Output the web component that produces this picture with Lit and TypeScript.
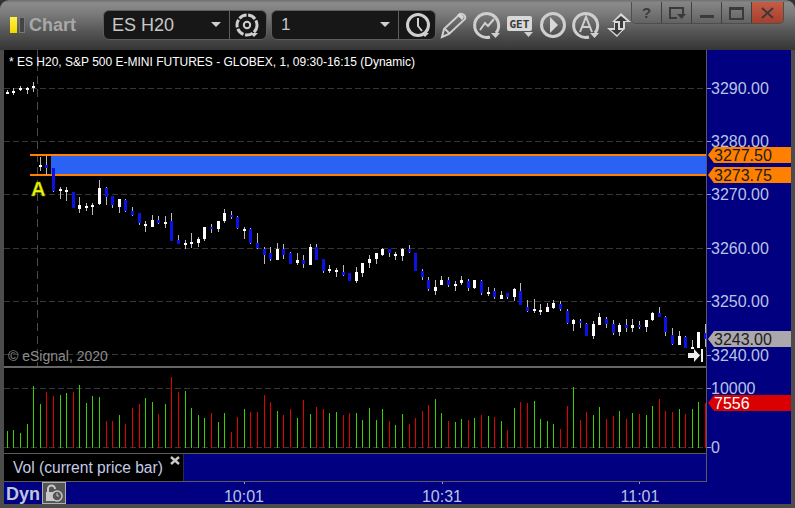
import { LitElement, html, css, svg } from "lit";
import { customElement } from "lit/decorators.js";

// [wickTop, wickBottom, bodyTop, bodyBottom, colour]
const W = 1, B = 0;
const CANDLES: number[][] = [
  [90,94,92,94,W],[88,95,91,93,W],[86,91,88,90,W],[87,94,88,90,W],[82,92,86,88,W],
  [157,171,165,167,W],[156,175,165,168,B],[168,192,168,191,B],[187,199,189,191,W],[187,201,190,192,W],
  [192,208,192,208,B],[197,213,205,209,W],[203,211,206,208,W],[203,215,205,207,W],[180,205,188,204,W],
  [187,205,188,197,B],[196,208,196,205,B],[199,213,199,207,W],[199,212,200,211,B],[207,216,211,215,B],
  [213,225,213,223,B],[221,232,224,226,W],[215,227,220,227,W],[216,224,220,223,B],[216,228,222,224,W],
  [213,241,221,241,B],[235,244,240,244,B],[240,249,243,245,W],[233,248,242,244,W],[237,247,239,243,W],
  [227,241,227,239,W],[224,233,227,229,B],[221,232,221,229,W],[209,223,213,221,W],[211,219,215,217,B],
  [216,229,217,228,B],[227,239,229,231,W],[228,244,229,243,B],[233,249,243,248,B],[247,264,249,255,B],
  [247,261,253,259,B],[243,260,249,260,W],[244,259,249,255,B],[252,264,253,264,B],[253,265,260,263,W],
  [255,268,260,264,B],[244,265,247,265,W],[244,260,247,260,B],[259,273,259,271,B],[265,273,269,271,W],
  [268,277,270,272,W],[265,276,272,275,B],[273,281,273,281,B],[267,283,272,281,W],[263,277,263,273,W],
  [255,268,259,263,W],[253,264,253,259,W],[248,256,249,255,W],[249,257,249,253,B],[252,260,254,256,W],
  [248,261,249,256,W],[245,253,249,252,B],[253,271,253,271,B],[269,280,271,277,B],[277,291,280,289,B],
  [280,295,287,291,W],[276,285,280,285,W],[277,287,280,285,B],[281,291,284,286,W],[276,285,280,283,W],
  [279,291,281,288,B],[280,289,280,288,W],[280,295,281,293,B],[287,296,292,294,W],[288,299,291,297,B],
  [291,299,295,299,W],[293,299,293,297,B],[288,301,289,297,W],[283,305,291,305,B],[300,312,307,311,B],
  [299,313,309,311,W],[304,315,310,312,W],[303,312,307,312,W],[300,309,303,308,W],[301,311,304,309,B],
  [309,324,311,323,B],[319,331,320,324,W],[319,328,321,323,B],[323,336,324,336,B],[321,339,324,336,W],
  [313,325,317,325,W],[317,328,319,324,B],[320,335,324,333,B],[323,336,325,332,W],[319,332,325,328,B],
  [319,332,325,328,W],[321,329,325,327,B],[320,332,320,327,W],[312,321,313,320,W],[307,317,313,317,B],
  [316,336,317,332,B],[328,345,335,344,B],[331,345,336,345,W],[336,348,337,348,B],[340,349,347,349,W],
  [332,348,332,348,W],[324,347,333,339,B],
];
// absolute top of each volume bar; positive green, negative red
const VOL: number[] = [
  431,430,433,424,386,404,-392,-396,395,393,-392,385,403,396,397,-421,-421,415,-424,-408,
  -404,398,402,-414,404,-377,-392,391,408,415,418,-413,422,413,-432,-417,409,-412,-412,-395,
  -402,411,-415,-409,418,-400,414,-407,-409,413,412,-415,-413,413,420,408,420,409,-421,425,
  414,-424,-418,-411,-405,399,413,-421,422,419,-420,418,-415,416,-417,421,-430,408,-402,-403,
  401,419,421,424,-429,-406,387,-420,-412,415,407,-419,-416,411,-419,413,-414,415,406,-399,
  -411,-412,409,-414,409,402,-403,
];
const barX = (i: number) => Math.floor(7.33 + 6.585 * i);

const GRID = [88, 141, 194, 248, 301, 354];
const PRICES: [number, string][] = [[88, "3290.00"], [141, "3280.00"], [194, "3270.00"], [248, "3260.00"], [301, "3250.00"], [355, "3240.00"]];

const caret = (x: number, y: number, w = 10, h = 5) =>
  svg`<path class="caret" d="M${x} ${y}h${w}l-${w / 2} ${h}z"/>`;

@customElement("app-root")
export class AppRoot extends LitElement {
  static styles = css`
    :host { display: block; width: 795px; height: 508px; overflow: hidden; background: #333; font-family: "Liberation Sans", Arial, sans-serif; }
    .window { width: 795px; height: 508px; box-sizing: border-box; display: flex; flex-direction: column;
      background: linear-gradient(#6f6f6f 0, #8b8b8b 3px, #7a7a7a 14px, #555 32px, #353535 50px, #4c4c4c 50px);
      border-radius: 9px 9px 0 0; }
    .title { height: 50px; flex: none; display: flex; align-items: flex-start; position: relative; }
    .lights { display: flex; gap: 2px; margin: 17px 0 0 10px; }
    .light { width: 7px; height: 16px; box-sizing: border-box; }
    .light.on { background: linear-gradient(#fff24a, #f0d800); }
    .light.off { background: #444; border: 1px solid #777; width: 6px; }
    .name { font-size: 18px; font-weight: 700; color: #a8a8a8; margin: 15px 0 0 4px; line-height: 21px; width: 74px; }
    .combo { margin-top: 10px; height: 30px; box-sizing: border-box; background: #171717; border: 1px solid #5e5e5e; border-radius: 6px;
      display: flex; align-items: center; color: #c8c8c8; }
    .combo.a { width: 164px; }
    .combo.b { width: 165px; margin-left: 4px; }
    .combo .val { flex: 1; font-size: 18px; padding-left: 8px; line-height: 28px; }
    .combo.b .val { padding-left: 9px; font-size: 17px; }
    .combo .sep { width: 36px; height: 100%; border-left: 1px solid #5e5e5e; flex: none; }
    .combo .drop { flex: none; display: block; margin-right: 8px; }
    .combo svg { display: block; }
    .tools { display: flex; margin-top: 10px; }
    .tools svg { display: block; }
    .caps { display: flex; height: 21px; border: 1px solid #4e4e4e; border-top: 0; border-radius: 0 0 5px 5px; overflow: hidden; position: absolute; left: 631px; top: 2px; }
    .cap { width: 29px; height: 100%; border-right: 1px solid #3f3f3f; background: linear-gradient(#868686, #636363); display: flex; align-items: center; justify-content: center; }
    .cap:last-child { width: 31px; border-right: 0; background: linear-gradient(#c45c46, #a63f2b); }
    .cap svg { display: block; }
    .cap span { font-size: 15px; font-weight: 700; color: #3b3b3b; line-height: 1; }
    .body { margin: 0 4px 4px 4px; height: 454px; background: #000080; display: flex; flex-direction: column; }
    .top { display: flex; height: 432px; flex: none; }
    .plot { width: 702px; flex: none; display: flex; flex-direction: column; border-bottom: 1px solid #5a5a5a; height: 431px; }
    .plot svg, .axis svg, .times svg { display: block; }
    .pane-a { height: 316px; flex: none; }
    .pane-b { height: 85px; flex: none; border-top: 2px solid #666; }
    .legend { height: 27px; flex: none; display: flex; border-top: 1px solid #5a5a5a; }
    .legend-name { width: 180px; background: #000; border-right: 1px solid #2a2a4a; box-sizing: border-box; color: #c4cce6; font-size: 15.6px; line-height: 28px; padding-left: 9px; position: relative; }
    .close { position: absolute; right: 3px; top: 2px; display: block; }
    .axis { width: 85px; flex: none; border-left: 1px solid #5a5a5a; box-sizing: border-box; }
    .xaxis { flex: 1; display: flex; align-items: stretch; }
    .dyn { font-size: 18px; font-weight: 700; color: #c0c6dc; line-height: 24px; padding-left: 2px; width: 38px; flex: none; box-sizing: border-box; }
    .lock { width: 24px; height: 22px; box-sizing: border-box; border: 1px solid #b0b0b0; background: #555; flex: none; }
    .lock svg { display: block; }
    .times { flex: 1; }
    .candle-w { fill: #fff; }
    .candle-b { fill: #0a12e6; }
    .wick-w { fill: #bbb; }
    .wick-b { fill: #bbb; }
    .grid { stroke: #363636; stroke-width: 1; stroke-dasharray: 6 3; fill: none; }
    .vgrid { stroke: #4a4a4a; stroke-width: 1; stroke-dasharray: 8 5; fill: none; }
    .zone { fill: #2a62f4; }
    .level { fill: #ff8000; }
    .title-text { fill: #fff; font-size: 12px; }
    .copy { fill: #8c8c8c; font-size: 14px; }
    .mark { fill: #f4f400; stroke: #6f8f00; stroke-width: .4; font-size: 20px; font-weight: 700; }
    .gain { fill: #39d000; }
    .loss { fill: #e00000; }
    .tick { stroke: #8f9ac0; stroke-width: 1; }
    .label { fill: #b8c4e4; font-size: 16px; }
    .tag-text { fill: #1c1c1c; font-size: 16px; }
    .tag-vol { fill: #fff; font-size: 16px; }
    .orange { fill: #ff8000; }
    .grey { fill: #aaa8ac; }
    .red { fill: #d80000; }
    .ic { fill: none; stroke: #cfcfcf; stroke-width: 3; }
    .ic-thin { fill: none; stroke: #cfcfcf; stroke-width: 2; }
    .ic-fill { fill: #d8d8d8; }
    .caret { fill: #d0d0d0; }
    .dark { fill: #3a3a3a; }
    .cap-ic { fill: none; stroke: #3a3a3a; stroke-width: 2; }
    .cap-fill { fill: #3a3a3a; }
    .get-text { fill: #3a3a3a; font-size: 11px; font-weight: 700; font-family: "DejaVu Sans Mono", monospace; }
    .arrow { fill: #eee; }
    .lock-ic { fill: none; stroke: #c8c8c8; stroke-width: 2; }
    .lock-fill { fill: #c8c8c8; }
  `;

  private candles() {
    return CANDLES.map(([wt, wb, bt, bb, c], i) => {
      const x = barX(i);
      const k = c ? "w" : "b";
      return svg`<rect class="wick-${k}" x=${x} y=${wt} width="1" height=${wb - wt}/>
        <rect class="candle-${k}" x=${x - 1} y=${bt} width="3" height=${bb - bt}/>`;
    });
  }

  private volumes() {
    return VOL.map((v, i) =>
      svg`<rect class=${v > 0 ? "gain" : "loss"} x=${barX(i)} y=${Math.abs(v)} width="1" height=${448 - Math.abs(v)}/>`);
  }

  private tag(y: number, cls: string, txt: string, text: string) {
    return svg`<path class=${cls} d="M708 ${y}l6 -8h77v16h-77z"/>
      <text class=${txt} x="714" y=${y + 6}>${text}</text>`;
  }

  render() {
    return html`<div class="window">
      <div class="title">
        <div class="lights"><div class="light on"></div><div class="light off"></div></div>
        <div class="name">Chart</div>
        <div class="combo a">
          <span class="val">ES H20</span>
          <svg class="drop" width="10" height="6">${caret(0, 0)}</svg>
          <div class="sep">
            <svg width="36" height="28" viewBox="231 11 36 28">
              <circle class="ic" cx="248" cy="25" r="10" stroke-dasharray="8 1.6"/>
              <circle class="ic-thin" cx="248" cy="25" r="3.2"/>
              ${caret(251, 33, 8, 4)}
            </svg>
          </div>
        </div>
        <div class="combo b">
          <span class="val">1</span>
          <svg class="drop" width="10" height="6">${caret(0, 0)}</svg>
          <div class="sep">
            <svg width="36" height="28" viewBox="398 11 36 28">
              <circle class="ic" cx="417" cy="25" r="10.5"/>
              <path class="ic-thin" d="M417 18v8l4 5"/>
              ${caret(420, 33, 8, 4)}
            </svg>
          </div>
        </div>
        <div class="tools">
          <svg width="196" height="32" viewBox="436 10 196 32">
            <path class="ic-thin" d="M442 37l2-8 16-15q2-1 4 1t1 4l-16 15z"/>
            <path class="ic-thin" d="M445 29l5 5"/>
            <path class="ic-fill" d="M457 15l3-2 4 4-2 3z"/>
            <path class="ic" d="M496 33a12 12 0 1 0-6 4"/>
            <path class="ic-thin" d="M480 30l5-7 3 3 6-7"/>
            ${caret(491, 33, 9, 5)}
            <rect class="ic-fill" x="507" y="16" width="25" height="15" rx="2"/>
            <text class="get-text" x="509.500" y="28">GET</text>
            ${caret(524, 32, 9, 5)}
            <circle class="ic" cx="553" cy="25" r="11.500"/>
            <path class="ic-fill" d="M550 17l8 8-8 8z"/>
            <path class="ic" d="M595 33a12 12 0 1 0-6 4"/>
            <path class="ic-thin" d="M580 32l6-15 6 15M582 27h8"/>
            ${caret(590, 33, 9, 5)}
            <path class="ic-fill" d="M621 13l10 9h-6v7l-4 3-4-3v-7h-5z"/>
            <path class="dark" d="M621 16l6 5h-4v7h-4v-7h-4z"/>
            <path class="ic-fill" d="M614 21h6v7h5l-8 9-10-9h7z"/>
            <path class="dark" d="M615 23h3v7h4l-5 5-6-5h4z"/>
          </svg>
        </div>
        <div class="caps">
          <div class="cap"><span>?</span></div>
          <div class="cap"><svg width="18" height="14"><path class="cap-ic" d="M9 12H2V2h13v6"/><path class="cap-fill" d="M9 8h9l-4.500 5z"/></svg></div>
          <div class="cap"><svg width="18" height="14"><rect class="cap-fill" x="2" y="9" width="14" height="3"/></svg></div>
          <div class="cap"><svg width="18" height="14"><rect class="cap-ic" x="2" y="2" width="13" height="11"/><rect class="cap-fill" x="1" y="1" width="15" height="3"/></svg></div>
          <div class="cap"><svg width="18" height="14"><path class="cap-ic" d="M3 2l11 10M14 2L3 12"/></svg></div>
        </div>
      </div>
      <div class="body">
        <div class="top">
          <div class="plot">
            <div class="pane-a">
              <svg width="702" height="316" viewBox="4 50 702 316" shape-rendering="crispEdges">
                <rect x="4" y="50" width="702" height="316" fill="#000"/>
                ${GRID.map((y) => svg`<path class="grid" d="M4 ${y + 0.5}H706"/>`)}
                <path class="vgrid" d="M37.500 50V366"/>
                <rect class="zone" x="51" y="156" width="655" height="18"/>
                <rect class="level" x="30" y="154" width="676" height="2"/>
                <rect class="level" x="30" y="174" width="676" height="2"/>
                ${this.candles()}
                <g shape-rendering="auto">
                  <text class="title-text" x="9" y="66">* ES H20, S&amp;P 500 E-MINI FUTURES - GLOBEX, 1, 09:30-16:15 (Dynamic)</text>
                  <text class="copy" x="8" y="361">© eSignal, 2020</text>
                  <text class="mark" x="31" y="196">A</text>
                  <path class="arrow" d="M688 353h6v-4l6 6.500-6 6.500v-4h-6z"/>
                  <rect class="arrow" x="701" y="349" width="2" height="13"/>
                </g>
              </svg>
            </div>
            <div class="pane-b">
              <svg width="702" height="85" viewBox="4 368 702 85" shape-rendering="crispEdges">
                <rect x="4" y="368" width="702" height="85" fill="#000"/>
                <path class="grid" d="M4 388.500H706M4 447.500H706"/>
                ${this.volumes()}
              </svg>
            </div>
            <div class="legend">
              <div class="legend-name">Vol (current price bar)
                <svg class="close" width="10" height="9"><path d="M1 1l8 7M9 1L1 8" fill="none" stroke="#c8c8c8" stroke-width="2.400"/></svg>
              </div>
            </div>
          </div>
          <div class="axis">
            <svg width="84" height="431" viewBox="707 50 84 431">
              ${PRICES.map(([y, t]) => svg`<path class="tick" d="M707 ${y + 0.5}h4"/><text class="label" x="711" y=${y + 6}>${t}</text>`)}
              <path class="tick" d="M707 388.500h4M707 447.500h4"/>
              <text class="label" x="711" y="394">10000</text>
              <text class="label" x="711" y="453">0</text>
              ${this.tag(155, "orange", "tag-text", "3277.50")}
              ${this.tag(175, "orange", "tag-text", "3273.75")}
              ${this.tag(339, "grey", "tag-text", "3243.00")}
              ${this.tag(403, "red", "tag-vol", "7556")}
            </svg>
          </div>
        </div>
        <div class="xaxis">
          <div class="dyn">Dyn</div>
          <div class="lock">
            <svg width="22" height="20" viewBox="0 0 22 20">
              <path class="lock-ic" d="M5 9V6a3.500 3.500 0 0 1 7 0"/>
              <rect class="lock-fill" x="3" y="9" width="10" height="9"/>
              <circle cx="14" cy="13" r="5" fill="#555" stroke="#c8c8c8" stroke-width="1.500"/>
              <path d="M14 10v3h2" fill="none" stroke="#c8c8c8"/>
            </svg>
          </div>
          <div class="times">
            <svg width="725" height="22" viewBox="66 482 725 22">
              <path class="tick" d="M244.500 482v2M442.500 482v2M639.500 482v2"/>
              <text class="label" x="244" y="502" text-anchor="middle">10:01</text>
              <text class="label" x="442" y="502" text-anchor="middle">10:31</text>
              <text class="label" x="640" y="502" text-anchor="middle">11:01</text>
            </svg>
          </div>
        </div>
      </div>
    </div>`;
  }
}
